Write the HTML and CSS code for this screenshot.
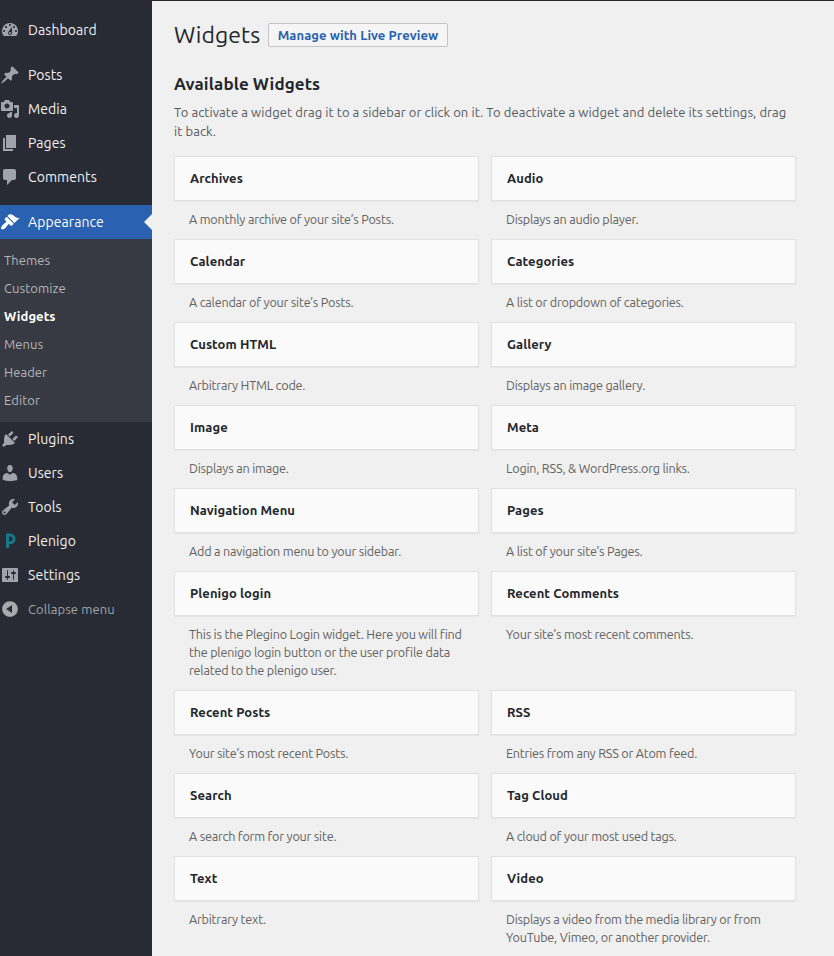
FILE: index.html
```html
<!DOCTYPE html>
<html lang="en">
<head>
<meta charset="utf-8">
<title>Widgets</title>
<link rel="stylesheet" href="styles.css">
</head>
<body>
<div class="layout">
<nav class="menu">
  <a class="item"><svg class="icon" viewBox="0 0 20 20"><path d="M3.76 16h12.48A7.998 7.998 0 0 0 10 3a7.998 7.998 0 0 0-6.24 13zM10 4c.55 0 1 .45 1 1s-.45 1-1 1-1-.45-1-1 .45-1 1-1zM6 6c.55 0 1 .45 1 1s-.45 1-1 1-1-.45-1-1 .45-1 1-1zm8 0c.55 0 1 .45 1 1s-.45 1-1 1-1-.45-1-1 .45-1 1-1zm-5.37 5.55L12 7v6c0 1.1-.9 2-2 2s-2-.9-2-2c0-.57.24-1.08.63-1.45zM4 10c.55 0 1 .45 1 1s-.45 1-1 1-1-.45-1-1 .45-1 1-1zm12 0c.55 0 1 .45 1 1s-.45 1-1 1-1-.45-1-1 .45-1 1-1zm-5 3c0-.55-.45-1-1-1s-1 .45-1 1 .45 1 1 1 1-.45 1-1z"/></svg><span>Dashboard</span></a>
  <div class="separator"></div>
  <a class="item"><svg class="icon" viewBox="0 0 20 20"><path d="M10.44 3.02l1.82-1.82 6.36 6.35-1.83 1.82c-1.05-.68-2.48-.57-3.41.36l-.75.75c-.92.93-1.04 2.35-.35 3.41l-1.83 1.82-2.41-2.41-2.8 2.79c-.42.42-3.38 2.71-3.8 2.29s1.86-3.39 2.28-3.81l2.79-2.79L4.1 9.36l1.83-1.82c1.05.69 2.48.57 3.4-.36l.75-.75c.93-.92 1.05-2.35.36-3.41z"/></svg><span>Posts</span></a>
  <a class="item"><svg class="icon" viewBox="0 0 20 20"><path d="M13 11V4c0-.55-.45-1-1-1h-1.67L9 1H5L3.67 3H2c-.55 0-1 .45-1 1v7c0 .55.45 1 1 1h10c.55 0 1-.45 1-1zM7 4.5c1.38 0 2.5 1.12 2.5 2.5S8.38 9.5 7 9.5 4.5 8.38 4.5 7 5.62 4.5 7 4.5zM14 6h5v10.5c0 1.38-1.12 2.5-2.5 2.5S14 17.88 14 16.5s1.12-2.5 2.5-2.5c.17 0 .34.02.5.05V9h-3V6zm-4 8.05V13h2v3.5c0 1.38-1.12 2.5-2.5 2.5S7 17.88 7 16.5 8.12 14 9.5 14c.17 0 .34.02.5.05z"/></svg><span>Media</span></a>
  <a class="item"><svg class="icon" viewBox="0 0 20 20"><path d="M6 15V2h10v13H6zm-1 1h8v2H3V5h2v11z"/></svg><span>Pages</span></a>
  <a class="item"><svg class="icon" viewBox="0 0 20 20"><path d="M5 2h9c1.1 0 2 .9 2 2v7c0 1.1-.9 2-2 2h-2l-5 5v-5H5c-1.1 0-2-.9-2-2V4c0-1.1.9-2 2-2z"/></svg><span>Comments</span></a>
  <div class="separator"></div>
  <a class="item current"><svg class="icon" viewBox="0 0 20 20"><path d="M14.48 11.06L7.41 3.99l1.5-1.5c.5-.56 2.3-.47 3.51.32 1.21.8 1.43 1.28 2.91 2.1 1.18.64 2.45 1.26 4.45.85zm-.71.71L6.7 4.7 4.93 6.47c-.39.39-.39 1.02 0 1.41l1.06 1.06c.39.39.39 1.03 0 1.42-.6.6-1.43 1.11-2.21 1.69-.35.26-.7.53-1.01.84C1.43 14.23.4 16.08 1.4 17.07c.99 1 2.84-.03 4.18-1.36.31-.31.58-.66.85-1.02.57-.78 1.08-1.61 1.69-2.21.39-.39 1.02-.39 1.41 0l1.06 1.06c.39.39 1.02.39 1.41 0z"/></svg><span>Appearance</span></a>
  <div class="submenu">
    <a>Themes</a><a>Customize</a><a class="active">Widgets</a><a>Menus</a><a>Header</a><a>Editor</a>
  </div>
  <a class="item"><svg class="icon" viewBox="0 0 20 20"><path d="M13.11 4.36L9.87 7.6 8 5.73l3.24-3.24c.35-.34 1.05-.2 1.56.32.52.51.66 1.21.31 1.55zm-8 1.77l.91-1.12 9.01 9.01-1.19.84c-.71.71-2.63 1.16-3.82 1.16H6.14L4.9 17.26c-.59.59-1.54.59-2.12 0-.59-.58-.59-1.53 0-2.12l1.24-1.24v-3.88c0-1.13.4-3.19 1.09-3.89zm7.26 3.97l3.24-3.24c.34-.35 1.04-.21 1.55.31.52.51.66 1.21.31 1.55l-3.24 3.25z"/></svg><span>Plugins</span></a>
  <a class="item"><svg class="icon" viewBox="0 0 20 20"><path d="M10 9.25c-2.27 0-2.73-3.44-2.73-3.44C7 4.02 7.82 2 9.97 2c2.16 0 2.98 2.02 2.71 3.81 0 0-.41 3.44-2.68 3.44zm0 2.57L12.72 10c2.39 0 4.52 2.33 4.52 4.53v2.49s-3.65 1.13-7.24 1.13c-3.65 0-7.24-1.13-7.24-1.13v-2.49c0-2.25 1.94-4.48 4.47-4.48z"/></svg><span>Users</span></a>
  <a class="item"><svg class="icon" viewBox="0 0 20 20"><path d="M16.68 9.77c-1.34 1.34-3.3 1.67-4.95.99l-5.41 6.52c-.99.99-2.59.99-3.58 0s-.99-2.59 0-3.57l6.52-5.42c-.68-1.65-.35-3.61.99-4.95 1.28-1.28 3.12-1.62 4.72-1.06l-2.89 2.89 2.82 2.82 2.86-2.87c.53 1.58.18 3.39-1.08 4.65zM3.81 16.21c.4.39 1.04.39 1.43 0 .4-.4.4-1.04 0-1.43-.39-.4-1.03-.4-1.43 0-.39.39-.39 1.03 0 1.43z"/></svg><span>Tools</span></a>
  <a class="item"><svg class="icon plenigo" viewBox="0 0 20 20"><path d="M7.5 17V4H10.5a3.5 3.9 0 0 1 0 7.8H8"/></svg><span>Plenigo</span></a>
  <a class="item"><svg class="icon" viewBox="0 0 20 20"><path d="M18 16V4c0-.55-.45-1-1-1H3c-.55 0-1 .45-1 1v12c0 .55.45 1 1 1h14c.55 0 1-.45 1-1zM8 11h1c.55 0 1 .45 1 1s-.45 1-1 1H8v1.5c0 .28-.22.5-.5.5s-.5-.22-.5-.5V13H6c-.55 0-1-.45-1-1s.45-1 1-1h1V5.5c0-.28.22-.5.5-.5s.5.22.5.5V11zm5-2h-1c-.55 0-1-.45-1-1s.45-1 1-1h1V5.5c0-.28.22-.5.5-.5s.5.22.5.5V7h1c.55 0 1 .45 1 1s-.45 1-1 1h-1v5.5c0 .28-.22.5-.5.5s-.5-.22-.5-.5V9z"/></svg><span>Settings</span></a>
  <a class="item collapse"><svg class="icon" viewBox="0 0 20 20"><path d="M10 2.16c4.33 0 7.84 3.51 7.84 7.84s-3.51 7.84-7.84 7.84S2.16 14.33 2.16 10 5.67 2.16 10 2.16zm2 11.72V6.12L6.18 9.97z"/></svg><span>Collapse menu</span></a>
</nav>
<main class="content">
  <header class="heading"><h1>Widgets</h1><a class="button">Manage with Live Preview</a></header>
  <h2>Available Widgets</h2>
  <p class="intro">To activate a widget drag it to a sidebar or click on it. To deactivate a widget and delete its settings, drag<br>it back.</p>
  <div class="widgets">
    <section class="widget"><h3>Archives</h3><p>A monthly archive of your site’s Posts.</p></section>
    <section class="widget"><h3>Audio</h3><p>Displays an audio player.</p></section>
    <section class="widget"><h3>Calendar</h3><p>A calendar of your site’s Posts.</p></section>
    <section class="widget"><h3>Categories</h3><p>A list or dropdown of categories.</p></section>
    <section class="widget"><h3>Custom HTML</h3><p>Arbitrary HTML code.</p></section>
    <section class="widget"><h3>Gallery</h3><p>Displays an image gallery.</p></section>
    <section class="widget"><h3>Image</h3><p>Displays an image.</p></section>
    <section class="widget"><h3>Meta</h3><p>Login, RSS, &amp; WordPress.org links.</p></section>
    <section class="widget"><h3>Navigation Menu</h3><p>Add a navigation menu to your sidebar.</p></section>
    <section class="widget"><h3>Pages</h3><p>A list of your site’s Pages.</p></section>
    <section class="widget"><h3>Plenigo login</h3><p>This is the Plegino Login widget. Here you will find<br>the plenigo login button or the user profile data<br>related to the plenigo user.</p></section>
    <section class="widget"><h3>Recent Comments</h3><p>Your site’s most recent comments.</p></section>
    <section class="widget"><h3>Recent Posts</h3><p>Your site’s most recent Posts.</p></section>
    <section class="widget"><h3>RSS</h3><p>Entries from any RSS or Atom feed.</p></section>
    <section class="widget"><h3>Search</h3><p>A search form for your site.</p></section>
    <section class="widget"><h3>Tag Cloud</h3><p>A cloud of your most used tags.</p></section>
    <section class="widget"><h3>Text</h3><p>Arbitrary text.</p></section>
    <section class="widget"><h3>Video</h3><p>Displays a video from the media library or from<br>YouTube, Vimeo, or another provider.</p></section>
  </div>
</main>
</div>
</body>
</html>
```
FILE: styles.css
```css
* { box-sizing: border-box; }
body {
  margin: 0;
  height: 956px;
  overflow: hidden;
  background: #f0f0f0;
  border-top: 1px solid #272631;
  font-family: Ubuntu, "Noto Sans", sans-serif;
  font-size: 13px;
  letter-spacing: 0.075px;
  color: #555962;
}
h1, h2, h3, p { margin: 0; }
.layout { display: flex; height: 955px; }
.menu {
  width: 152px;
  flex: none;
  padding-top: 12px;
  background: #282b33;
}
.item {
  display: flex;
  align-items: center;
  gap: 8px;
  height: 34px;
  color: #f0f0f1;
  font-size: 14px;
}
.icon { width: 20px; height: 20px; flex: none; fill: #a0a3a9; }
.plenigo { fill: none; stroke: #187888; stroke-width: 3; }
.separator { height: 11px; }
.current { position: relative; background: #2a61b0; color: #fff; }
.current .icon { fill: #fff; }
.current::after {
  content: "";
  position: absolute;
  right: 0;
  top: 9px;
  border: 8px solid transparent;
  border-left-width: 0;
  border-right-color: #f0f0f0;
}
.submenu { height: 183px; padding: 7px 4px 8px; background: #373a43; }
.submenu a {
  display: block;
  height: 28px;
  line-height: 28px;
  color: #b4b6ba;
}
.submenu .active { color: #fff; font-weight: 700; }
.collapse { color: #a0a3a9; font-size: 13px; }
.collapse .icon { fill: #a9aaac; }
.content { flex: 1; padding: 21px 0 0 22px; }
.heading { display: flex; align-items: center; gap: 8px; height: 26px; }
h1 { width: 86px; font-size: 23px; font-weight: 400; line-height: 26px; color: #23262d; white-space: nowrap; }
.button {
  width: 180px;
  height: 24px;
  border: 1px solid #c3c4c7;
  border-radius: 2px;
  background: #f5f5f5;
  color: #2a61b0;
  font-weight: 700;
  line-height: 22px;
  text-align: center;
  white-space: nowrap;
}
h2 { height: 24px; margin-top: 24px; font-size: 17px; line-height: 24px; color: #23262d; }
.intro { height: 38px; margin-top: 7px; line-height: 19px; white-space: nowrap; }
.widgets { display: grid; grid-template-columns: 305px 305px; column-gap: 12px; margin-top: 15px; }
.widget h3 {
  height: 45px;
  padding-left: 15px;
  border: 1px solid #e1e1e2;
  background: #fafafa;
  box-shadow: 0 1px 1px rgba(0, 0, 0, .04);
  font-size: 13px;
  line-height: 43px;
  color: #23262d;
}
.widget p { padding: 9px 0 11px 15px; font-size: 12.6px; line-height: 18px; color: #626262; letter-spacing: -0.2px; white-space: nowrap; }
```
